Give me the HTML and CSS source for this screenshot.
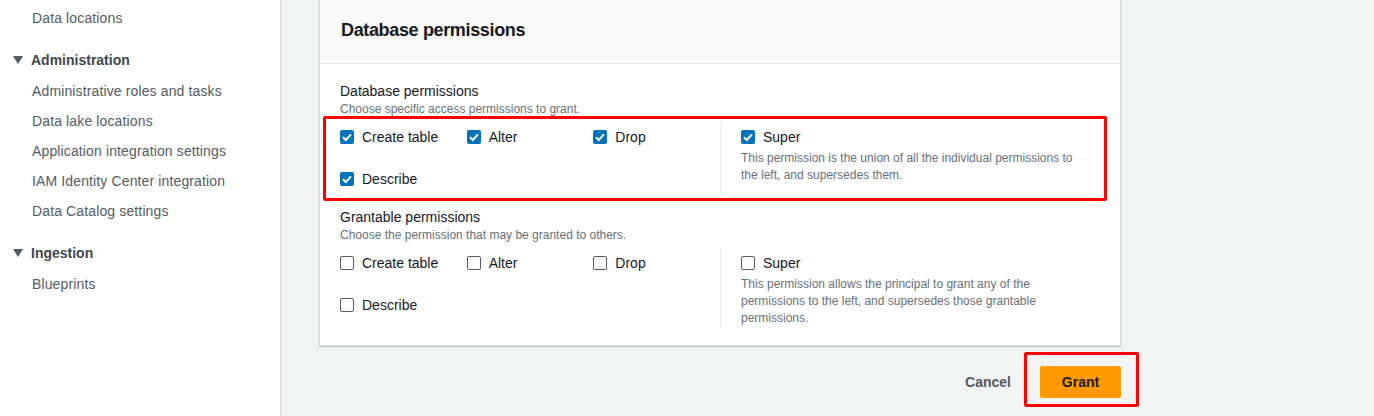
FILE: index.html
```html
<!DOCTYPE html>
<html lang="en">
<head>
<meta charset="utf-8">
<title>Database permissions</title>
<link rel="stylesheet" href="styles.css">
</head>
<body>
<div class="app">
  <nav class="sidebar">
    <a class="nav-link" href="#">Data locations</a>
    <div class="nav-section">
      <div class="nav-heading"><svg class="caret" width="10" height="8" viewBox="0 0 10 8"><path d="M0 0h10L5 8z" fill="currentColor"/></svg>Administration</div>
      <a class="nav-link" href="#">Administrative roles and tasks</a>
      <a class="nav-link" href="#">Data lake locations</a>
      <a class="nav-link" href="#">Application integration settings</a>
      <a class="nav-link" href="#">IAM Identity Center integration</a>
      <a class="nav-link" href="#">Data Catalog settings</a>
    </div>
    <div class="nav-section">
      <div class="nav-heading"><svg class="caret" width="10" height="8" viewBox="0 0 10 8"><path d="M0 0h10L5 8z" fill="currentColor"/></svg>Ingestion</div>
      <a class="nav-link" href="#">Blueprints</a>
    </div>
  </nav>

  <main class="content">
    <section class="panel">
      <header class="panel-header"><h2>Database permissions</h2></header>
      <div class="panel-body">
        <div class="field">
          <div class="field-label">Database permissions</div>
          <div class="field-desc">Choose specific access permissions to grant.</div>
          <div class="perm-grid">
            <div class="perm-options">
              <label class="check"><span class="box checked"><svg viewBox="0 0 14 14"><path d="M3 7.2l2.8 2.8L11 4.3" fill="none" stroke="#fff" stroke-width="2"/></svg></span>Create table</label>
              <label class="check"><span class="box checked"><svg viewBox="0 0 14 14"><path d="M3 7.2l2.8 2.8L11 4.3" fill="none" stroke="#fff" stroke-width="2"/></svg></span>Alter</label>
              <label class="check"><span class="box checked"><svg viewBox="0 0 14 14"><path d="M3 7.2l2.8 2.8L11 4.3" fill="none" stroke="#fff" stroke-width="2"/></svg></span>Drop</label>
              <label class="check"><span class="box checked"><svg viewBox="0 0 14 14"><path d="M3 7.2l2.8 2.8L11 4.3" fill="none" stroke="#fff" stroke-width="2"/></svg></span>Describe</label>
            </div>
            <div class="perm-super">
              <label class="check"><span class="box checked"><svg viewBox="0 0 14 14"><path d="M3 7.2l2.8 2.8L11 4.3" fill="none" stroke="#fff" stroke-width="2"/></svg></span>Super</label>
              <p class="super-desc">This permission is the union of all the individual permissions to the left, and supersedes them.</p>
            </div>
            <div class="highlight highlight-perms"></div>
          </div>
        </div>

        <div class="field field-second">
          <div class="field-label">Grantable permissions</div>
          <div class="field-desc">Choose the permission that may be granted to others.</div>
          <div class="perm-grid">
            <div class="perm-options">
              <label class="check"><span class="box"></span>Create table</label>
              <label class="check"><span class="box"></span>Alter</label>
              <label class="check"><span class="box"></span>Drop</label>
              <label class="check"><span class="box"></span>Describe</label>
            </div>
            <div class="perm-super">
              <label class="check"><span class="box"></span>Super</label>
              <p class="super-desc">This permission allows the principal to grant any of the permissions to the left, and supersedes those grantable permissions.</p>
            </div>
          </div>
        </div>
      </div>
    </section>

    <div class="actions">
      <button class="btn-link" type="button">Cancel</button>
      <div class="grant-wrap">
        <button class="btn-primary" type="button">Grant</button>
        <div class="highlight highlight-grant"></div>
      </div>
    </div>
  </main>
</div>
</body>
</html>
```

FILE: styles.css
```css
* { box-sizing: border-box; }

html, body {
  margin: 0;
  padding: 0;
  height: 100%;
}

body {
  font-family: "Liberation Sans", Arial, sans-serif;
  font-size: 14px;
  color: #16191f;
  background: #f2f3f3;
  overflow: hidden;
}

.app {
  display: flex;
  height: 416px;
}

/* Sidebar */
.sidebar {
  flex: 0 0 281px;
  background: #fff;
  border-right: 1px solid #d5dbdb;
  padding-top: 3px;
  display: flex;
  flex-direction: column;
}

.nav-link {
  display: block;
  height: 30px;
  line-height: 30px;
  padding-left: 32px;
  color: #545b64;
  text-decoration: none;
  font-size: 14px;
  letter-spacing: 0.13px;
}

.nav-section {
  margin-top: 12px;
}

.nav-heading {
  display: flex;
  align-items: center;
  height: 30px;
  margin-bottom: 1px;
  padding-left: 13px;
  font-weight: 700;
  color: #414750;
}

.caret {
  margin-right: 8px;
  color: #545b64;
}

/* Content */
.content {
  flex: 1;
  padding-left: 38px;
}

.panel {
  width: 802px;
  background: #fff;
  border: 1px solid #d5dbdb;
  border-top: none;
  box-shadow: 0 1px 1px 0 rgba(0, 28, 36, 0.2);
}

.panel-header {
  height: 64px;
  background: #fafafa;
  border-bottom: 1px solid #eaeded;
  display: flex;
  align-items: center;
  padding: 0 20px 2px 21px;
}

.panel-header h2 {
  margin: 0;
  font-size: 18px;
  font-weight: 700;
  letter-spacing: -0.35px;
  color: #16191f;
}

.panel-body {
  padding: 17px 20px 18px 20px;
}

.field-label {
  font-size: 14px;
  line-height: 20px;
  color: #16191f;
}

.field-desc {
  font-size: 12px;
  line-height: 16px;
  color: #687078;
}

.field-second {
  margin-top: 13px;
}

.perm-grid {
  position: relative;
  display: flex;
  margin-top: 5px;
}

.perm-options {
  flex: 0 0 380px;
  display: grid;
  grid-template-columns: repeat(3, 1fr);
  grid-auto-rows: 30px;
  row-gap: 12px;
}

.perm-super {
  flex: 1;
  border-left: 1px solid #eaeded;
  padding-left: 20px;
}

.check {
  display: flex;
  align-items: center;
  height: 30px;
  font-size: 14px;
  color: #16191f;
  cursor: pointer;
}

.box {
  flex: 0 0 14px;
  width: 14px;
  height: 14px;
  margin-right: 8px;
  border: 1px solid #545b64;
  border-radius: 2px;
  background: #fff;
  display: flex;
}

.box.checked {
  border: none;
  border-radius: 2px;
  background: #0073bb;
}

.box svg {
  width: 14px;
  height: 14px;
}

.super-desc {
  margin: -2px 0 0 0;
  max-width: 350px;
  font-size: 12px;
  line-height: 17px;
  color: #687078;
}

/* Actions */
.actions {
  width: 802px;
  margin-top: 20px;
  display: flex;
  justify-content: flex-end;
  align-items: center;
  gap: 29px;
}

.btn-link {
  border: none;
  background: none;
  padding: 0;
  font-family: inherit;
  font-size: 14px;
  font-weight: 700;
  color: #545b64;
  cursor: pointer;
}

.grant-wrap {
  position: relative;
}

.btn-primary {
  display: block;
  width: 81px;
  height: 32px;
  border: none;
  border-radius: 2px;
  background: #ff9900;
  font-family: inherit;
  font-size: 14px;
  font-weight: 700;
  color: #16191f;
  cursor: pointer;
}

/* Annotation highlights */
.highlight {
  position: absolute;
  border: 3px solid #ff0000;
  border-radius: 2px;
  pointer-events: none;
}

.highlight-perms {
  top: -6px;
  left: -17px;
  right: -7px;
  bottom: -7px;
}

.highlight-grant {
  top: -14px;
  left: -16px;
  right: -18px;
  bottom: -9px;
}
```
